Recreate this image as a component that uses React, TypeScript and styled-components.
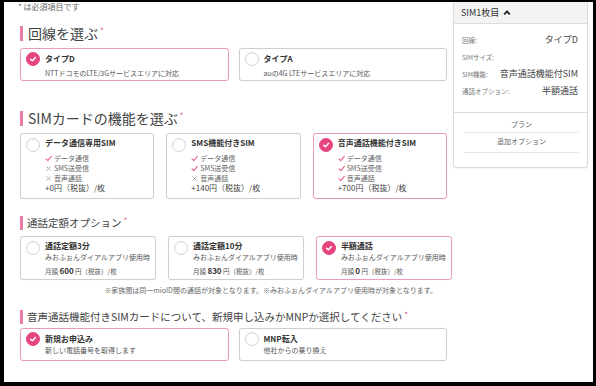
import React from 'react';
import styled, { createGlobalStyle } from 'styled-components';

const PINK = '#e4457f';

const Global = createGlobalStyle`
  html, body { margin: 0; padding: 0; background: #000; }
  body { font-family: "Noto Sans CJK JP", "Noto Sans", sans-serif; color: #333; }
  * { box-sizing: border-box; }
`;

const Frame = styled.div`
  width: 596px;
  height: 386px;
  padding: 2px 3px 4px 4px;
  background: #000;
`;

const Screen = styled.div`
  width: 100%;
  height: 100%;
  background: #fff;
  overflow: hidden;
  display: flex;
  align-items: flex-start;
  gap: 6px;
`;

const Main = styled.div`
  width: 427px;
  margin-left: 16px;
  display: flex;
  flex-direction: column;
`;

const Note = styled.div`
  font-size: 8px;
  line-height: 10px;
  color: #666;
  margin-left: -2px;
`;

const Title = styled.h2<{ $size: number; $lh: number; $mt: number }>`
  margin: ${(p) => p.$mt}px 0 0;
  font-size: ${(p) => p.$size}px;
  line-height: ${(p) => p.$lh}px;
  font-weight: 400;
  color: #444;
  border-left: 3px solid #ea7aa8;
  padding-left: ${(p) => (p.$size > 12 ? 5 : 4)}px;
  white-space: nowrap;
`;

const Star = styled.span`
  color: ${PINK};
  font-size: 8px;
  vertical-align: top;
  line-height: 10px;
  margin-left: 2px;
`;

const Row = styled.div<{ $cols: number; $gap: number; $mt: number }>`
  display: grid;
  grid-template-columns: repeat(${(p) => p.$cols}, 1fr);
  gap: ${(p) => p.$gap}px;
  margin-top: ${(p) => p.$mt}px;
`;

const Card = styled.div<{ $on?: boolean; $pad: string }>`
  display: flex;
  align-items: flex-start;
  gap: 5px;
  border: 1px solid ${(p) => (p.$on ? '#e99cc0' : '#cfcfcf')};
  border-radius: 3px;
  padding: ${(p) => p.$pad};
  background: #fff;
  box-shadow: 0 0 1px rgba(0, 0, 0, 0.08);
`;

const Radio = styled.span<{ $on?: boolean; $mt: number }>`
  flex: none;
  width: 14px;
  height: 14px;
  border-radius: 50%;
  margin-top: ${(p) => p.$mt}px;
  background: ${(p) => (p.$on ? PINK : '#fff')};
  border: 1px solid ${(p) => (p.$on ? PINK : '#d4d4d4')};
  display: flex;
  align-items: center;
  justify-content: center;
  box-shadow: ${(p) => (p.$on ? 'none' : 'inset 0 1px 1px rgba(0,0,0,0.05)')};
`;

const Body = styled.div`
  display: flex;
  flex-direction: column;
  min-width: 0;
`;

const CardTitle = styled.div`
  font-size: 8px;
  line-height: 12px;
  font-weight: 700;
  color: #333;
  white-space: nowrap;
`;

const Sub = styled.div<{ $lh: number; $mt?: number }>`
  font-size: 7px;
  line-height: ${(p) => p.$lh}px;
  margin-top: ${(p) => p.$mt || 0}px;
  color: #555;
  white-space: nowrap;
`;

const Feature = styled.div<{ $first?: boolean }>`
  display: flex;
  align-items: center;
  gap: 2px;
  font-size: 7px;
  line-height: 10px;
  margin-top: ${(p) => (p.$first ? 4 : 0)}px;
  color: #666;
  white-space: nowrap;
`;

const Price = styled.div`
  font-size: 8px;
  line-height: 10px;
  color: #444;
  white-space: nowrap;
`;

const Fee = styled.div`
  font-size: 6.5px;
  line-height: 12px;
  margin-top: 3px;
  color: #555;
  white-space: nowrap;
  b {
    font-size: 8px;
    font-weight: 700;
    color: #333;
  }
`;

const Footnote = styled.div`
  margin-top: 6px;
  font-size: 7px;
  line-height: 9px;
  color: #666;
  text-align: right;
  padding-right: 10px;
  white-space: nowrap;
`;

const Side = styled.aside`
  width: 135px;
  flex: none;
  border: 1px solid #dcdcdc;
  border-top: none;
  border-radius: 0 0 3px 3px;
  box-shadow: 0 1px 2px rgba(0, 0, 0, 0.06);
  background: #fff;
`;

const SideHead = styled.div`
  height: 22px;
  background: #f3f3f3;
  border-bottom: 1px solid #dcdcdc;
  display: flex;
  align-items: center;
  gap: 4px;
  padding-left: 7px;
  font-size: 9px;
  color: #333;
`;

const SideList = styled.div`
  padding: 7px 9px 13px 8px;
  border-bottom: 1px solid #dcdcdc;
`;

const SideRow = styled.div`
  display: flex;
  justify-content: space-between;
  align-items: center;
  height: 17px;
`;

const SideLabel = styled.span`
  font-size: 6.5px;
  color: #777;
`;

const SideValue = styled.span`
  font-size: 9px;
  color: #444;
`;

const SideLinks = styled.div`
  padding: 0 8px 14px 10px;
`;

const SideLink = styled.div<{ $pt: number }>`
  text-align: center;
  font-size: 7px;
  color: #666;
  height: 20px;
  padding-top: ${(p) => p.$pt}px;
  line-height: 12px;
  border-bottom: 1px solid #e6e6e6;
`;

const Check = () => (
  <svg width="8" height="8" viewBox="0 0 10 10">
    <path d="M2 5.2 L4.2 7.3 L8 3" fill="none" stroke="#fff" strokeWidth="1.8" strokeLinecap="round" strokeLinejoin="round" />
  </svg>
);

const Tick = () => (
  <svg width="7" height="7" viewBox="0 0 10 10">
    <path d="M1.5 5.5 L4 8 L9 2" fill="none" stroke="#e76a9c" strokeWidth="1.8" strokeLinecap="round" strokeLinejoin="round" />
  </svg>
);

const Cross = () => (
  <svg width="7" height="7" viewBox="0 0 10 10">
    <path d="M2.5 2.5 L7.5 7.5 M7.5 2.5 L2.5 7.5" fill="none" stroke="#aaa" strokeWidth="1.4" strokeLinecap="round" />
  </svg>
);

const Chevron = () => (
  <svg width="8" height="7" viewBox="0 0 10 8">
    <path d="M1.5 6.5 L5 2.5 L8.5 6.5" fill="none" stroke="#222" strokeWidth="2.2" strokeLinejoin="round" />
  </svg>
);

type SimPlan = { name: string; on?: boolean; feats: [string, boolean][]; price: string };

const sims: SimPlan[] = [
  { name: 'データ通信専用SIM', feats: [['データ通信', true], ['SMS送受信', false], ['音声通話', false]], price: '+0円（税抜）/枚' },
  { name: 'SMS機能付きSIM', feats: [['データ通信', true], ['SMS送受信', true], ['音声通話', false]], price: '+140円（税抜）/枚' },
  { name: '音声通話機能付きSIM', on: true, feats: [['データ通信', true], ['SMS送受信', true], ['音声通話', true]], price: '+700円（税抜）/枚' },
];

const calls = [
  { name: '通話定額3分', fee: '600' },
  { name: '通話定額10分', fee: '830' },
  { name: '半額通話', fee: '0', on: true },
];

export default function App() {
  return (
    <>
      <Global />
      <Frame>
        <Screen>
          <Main>
            <Note>* は必須項目です</Note>
            <Title $size={14} $lh={15} $mt={14}>
              回線を選ぶ<Star>*</Star>
            </Title>
            <Row $cols={2} $gap={10} $mt={7}>
              <Card $on $pad="4px 5px 2px">
                <Radio $on $mt={-1}>
                  <Check />
                </Radio>
                <Body>
                  <CardTitle>タイプD</CardTitle>
                  <Sub $lh={10} $mt={3}>NTTドコモのLTE/3Gサービスエリアに対応</Sub>
                </Body>
              </Card>
              <Card $pad="4px 5px 2px">
                <Radio $mt={-1} />
                <Body>
                  <CardTitle>タイプA</CardTitle>
                  <Sub $lh={10} $mt={3}>auの4G LTEサービスエリアに対応</Sub>
                </Body>
              </Card>
            </Row>

            <Title $size={14} $lh={15} $mt={30}>
              SIMカードの機能を選ぶ<Star>*</Star>
            </Title>
            <Row $cols={3} $gap={12} $mt={7}>
              {sims.map((s) => (
                <Card key={s.name} $on={s.on} $pad="3px 5px 5px">
                  <Radio $on={s.on} $mt={1}>
                    {s.on && <Check />}
                  </Radio>
                  <Body>
                    <CardTitle>{s.name}</CardTitle>
                    {s.feats.map(([f, ok], i) => (
                      <Feature key={f} $first={i === 0}>
                        {ok ? <Tick /> : <Cross />}
                        {f}
                      </Feature>
                    ))}
                    <Price>{s.price}</Price>
                  </Body>
                </Card>
              ))}
            </Row>

            <Title $size={10.5} $lh={14} $mt={17}>
              通話定額オプション<Star>*</Star>
            </Title>
            <Row $cols={3} $gap={12} $mt={6}>
              {calls.map((c) => (
                <Card key={c.name} $on={c.on} $pad="3px 5px 2px">
                  <Radio $on={c.on} $mt={1}>
                    {c.on && <Check />}
                  </Radio>
                  <Body>
                    <CardTitle>{c.name}</CardTitle>
                    <Sub $lh={10}>みおふぉんダイアルアプリ使用時</Sub>
                    <Fee>
                      月額 <b>{c.fee}</b> 円（税抜）/枚
                    </Fee>
                  </Body>
                </Card>
              ))}
            </Row>
            <Footnote>※家族間は同一mioID間の通話が対象となります。※みおふぉんダイアルアプリ使用時が対象となります。</Footnote>

            <Title $size={10.5} $lh={14} $mt={15}>
              音声通話機能付きSIMカードについて、新規申し込みかMNPか選択してください<Star>*</Star>
            </Title>
            <Row $cols={2} $gap={10} $mt={4}>
              <Card $on $pad="4px 5px 5px">
                <Radio $on $mt={-1}>
                  <Check />
                </Radio>
                <Body>
                  <CardTitle>新規お申込み</CardTitle>
                  <Sub $lh={10}>新しい電話番号を取得します</Sub>
                </Body>
              </Card>
              <Card $pad="4px 5px 5px">
                <Radio $mt={-1} />
                <Body>
                  <CardTitle>MNP転入</CardTitle>
                  <Sub $lh={10}>他社からの乗り換え</Sub>
                </Body>
              </Card>
            </Row>
          </Main>

          <Side>
            <SideHead>
              SIM1枚目
              <Chevron />
            </SideHead>
            <SideList>
              <SideRow>
                <SideLabel>回線:</SideLabel>
                <SideValue>タイプD</SideValue>
              </SideRow>
              <SideRow>
                <SideLabel>SIMサイズ:</SideLabel>
                <SideValue></SideValue>
              </SideRow>
              <SideRow>
                <SideLabel>SIM機能:</SideLabel>
                <SideValue>音声通話機能付SIM</SideValue>
              </SideRow>
              <SideRow>
                <SideLabel>通話オプション:</SideLabel>
                <SideValue>半額通話</SideValue>
              </SideRow>
            </SideList>
            <SideLinks>
              <SideLink $pt={5}>プラン</SideLink>
              <SideLink $pt={2}>追加オプション</SideLink>
            </SideLinks>
          </Side>
        </Screen>
      </Frame>
    </>
  );
}
